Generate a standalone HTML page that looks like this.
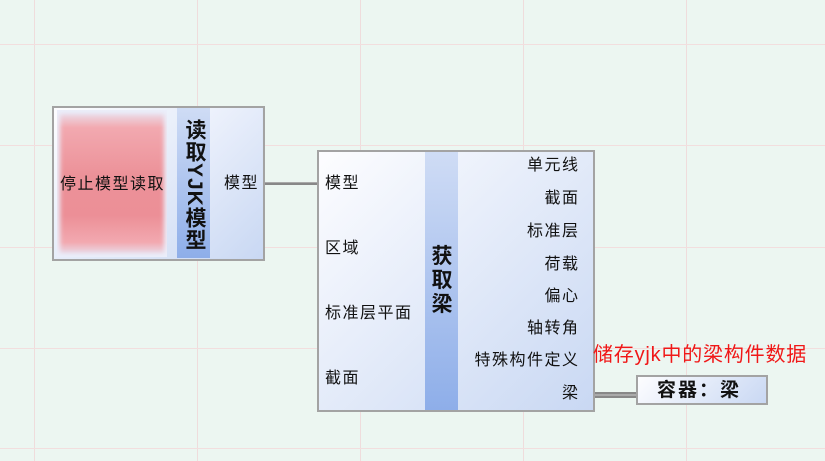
<!DOCTYPE html>
<html><head><meta charset="utf-8"><style>
*{margin:0;padding:0;box-sizing:border-box}
body{width:825px;height:461px;overflow:hidden;position:relative;background:#ecf6f1;font-family:"Liberation Sans","Noto Sans CJK SC",sans-serif;}
.v{position:absolute;top:0;bottom:0;width:1px;background:#efdcdc}
.h{position:absolute;left:0;right:0;height:1px;background:#f2dede}
.a{position:absolute}
.t{position:absolute;font-size:16px;letter-spacing:1.5px;color:#111;white-space:nowrap;line-height:18px}
.r{margin-right:-1.5px}
.node{position:absolute;border:2px solid #a3a3a3;background:linear-gradient(135deg,#fdfdff,#c9d8f3)}
.bar{position:absolute;background:linear-gradient(180deg,#cfdcf5,#8eaee9)}
.bt{position:absolute;font-weight:bold;font-size:20px;color:#111;line-height:22px;text-align:center}
</style></head><body>
<div class="v" style="left:34px"></div><div class="v" style="left:197px"></div><div class="v" style="left:360px"></div><div class="v" style="left:523px"></div><div class="v" style="left:686px"></div>
<div class="h" style="top:44px"></div><div class="h" style="top:145px"></div><div class="h" style="top:247px"></div><div class="h" style="top:348px"></div><div class="h" style="top:448px"></div>

<!-- wires -->
<div class="a" style="left:264px;top:182px;width:54px;height:3px;background:#888;border-top:1px solid #aaa"></div>
<div class="a" style="left:592px;top:392px;width:46px;height:6px;background:#aaa;border-top:2px solid #888;border-bottom:2px solid #888"></div>

<!-- node 1 -->
<div class="node" style="left:52px;top:106px;width:213px;height:155px"></div>
<div class="a" style="left:57px;top:110px;width:110px;height:147px;background:linear-gradient(180deg,#e9e8f6 0%,#f2a9b0 12%,#ec9198 45%,#ec8f97 72%,#f2a9b0 90%,#e6e9f8 100%);box-shadow:inset 0 0 5px 3px #ebeefa"></div>
<div class="bar" style="left:177px;top:108px;width:33px;height:150px"></div>
<div class="a" style="left:210px;top:108px;width:52px;height:150px;background:linear-gradient(135deg,#eef2fc,#c9d8f3)"></div>
<div class="t" style="left:60px;top:176px">停止模型读取</div>
<div class="bt" style="left:181px;top:115px;width:26px;height:140px;writing-mode:vertical-rl;font-size:21px;letter-spacing:1px;line-height:26px">读取YJK模型</div>
<div class="t" style="left:224px;top:175px">模型</div>

<!-- node 2 -->
<div class="node" style="left:317px;top:150px;width:278px;height:262px"></div>
<div class="bar" style="left:425px;top:152px;width:33px;height:258px"></div>
<div class="bt" style="left:429px;top:245px;width:26px;line-height:24px;font-size:21px">获<br>取<br>梁</div>
<div class="t" style="left:325px;top:175px">模型</div>
<div class="t" style="left:325px;top:240px">区域</div>
<div class="t" style="left:325px;top:305px">标准层平面</div>
<div class="t" style="left:325px;top:370px">截面</div>
<div class="t" style="right:247px;top:157px"><span class="r">单元线</span></div>
<div class="t" style="right:247px;top:190px"><span class="r">截面</span></div>
<div class="t" style="right:247px;top:223px"><span class="r">标准层</span></div>
<div class="t" style="right:247px;top:256px"><span class="r">荷载</span></div>
<div class="t" style="right:247px;top:288px"><span class="r">偏心</span></div>
<div class="t" style="right:247px;top:320px"><span class="r">轴转角</span></div>
<div class="t" style="right:247px;top:352px"><span class="r">特殊构件定义</span></div>
<div class="t" style="right:247px;top:385px"><span class="r">梁</span></div>

<div class="t" style="left:593px;top:344px;color:#f01818;font-size:20px;letter-spacing:0.8px;line-height:22px">储存yjk中的梁构件数据</div>

<!-- container -->
<div class="node" style="left:636px;top:375px;width:132px;height:30px"></div>
<div class="t" style="left:657px;top:380px;font-weight:bold;font-size:19px;letter-spacing:2px;line-height:22px">容器：梁</div>
</body></html>
